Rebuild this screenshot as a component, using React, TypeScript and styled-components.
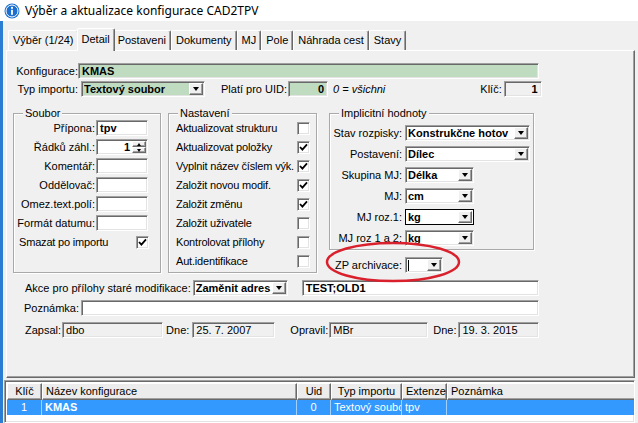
import styled, { createGlobalStyle, css } from 'styled-components';

const GlobalStyle = createGlobalStyle`
  * { box-sizing: border-box; }
  html, body { margin: 0; padding: 0; background: #f0f0f0; }
  body {
    font-family: "Liberation Sans", Arial, sans-serif;
    font-size: 11px;
    color: #000;
  }
`;

// windows classic 3d edges
const sunken = css`
  border: 1px solid;
  border-color: #a0a0a0 #fff #fff #a0a0a0;
  box-shadow: inset 1px 1px 0 #696969, inset -1px -1px 0 #e3e3e3;
`;

const raised = css`
  background: #f0f0f0;
  border: 1px solid;
  border-color: #fff #696969 #696969 #fff;
  box-shadow: inset -1px -1px 0 #a0a0a0;
`;

const tones = { white: '#fff', green: '#c0dcc0', gray: '#f0f0f0' };
type Tone = keyof typeof tones;

const Window = styled.div`
  width: 638px;
  height: 423px;
  overflow: hidden;
  display: flex;
  flex-direction: column;
  background: #f0f0f0;
`;

const TitleBar = styled.div`
  flex: none;
  height: 21px;
  display: flex;
  align-items: center;
  gap: 5px;
  padding-left: 4px;
  background: #fff;
  font-family: "Noto Sans", "Open Sans", sans-serif;
  font-size: 12px;
`;

const Body = styled.div`
  flex: 1;
  display: flex;
  flex-direction: column;
  border-left: 3px solid #2b7cd3;
  padding: 8px 3px 0 3px;
`;

const TabStrip = styled.div`
  flex: none;
  height: 21px;
  display: flex;
  align-items: flex-end;
  padding-left: 2px;
`;

const Tab = styled.div<{ $active?: boolean }>`
  position: relative;
  height: ${(p) => (p.$active ? 23 : 20)}px;
  margin: ${(p) => (p.$active ? '0 -2px -1px' : '0')};
  z-index: ${(p) => (p.$active ? 1 : 0)};
  padding: 0 4px;
  line-height: ${(p) => (p.$active ? 20 : 18)}px;
  white-space: nowrap;
  background: #f0f0f0;
  border-top: 1px solid #fff;
  border-left: 1px solid #fff;
  border-right: 1px solid #696969;
  border-radius: 2px 2px 0 0;
  box-shadow: inset -1px 0 0 #a0a0a0;
`;

const Panel = styled.div`
  position: relative;
  flex: none;
  height: 328px;
  padding-top: 12px;
  border: 1px solid;
  border-color: #fff #696969 #696969 #fff;
  box-shadow: inset -1px -1px 0 #a0a0a0;
`;

const Form = styled.div`
  width: 532px;
  display: flex;
  flex-direction: column;
`;

const Row = styled.div<{ $mt?: number; $pl?: number }>`
  display: flex;
  align-items: center;
  height: 16px;
  margin-top: ${(p) => p.$mt ?? 0}px;
  padding-left: ${(p) => p.$pl ?? 0}px;
`;

const Label = styled.span<{ $w?: number; $ml?: number }>`
  flex: none;
  ${(p) => (p.$w ? `width: ${p.$w}px;` : '')}
  margin-left: ${(p) => p.$ml ?? 0}px;
  text-align: right;
  white-space: nowrap;
`;

const Note = styled.span<{ $ml?: number }>`
  margin-left: ${(p) => p.$ml ?? 0}px;
  font-style: italic;
  white-space: nowrap;
`;

const Field = styled.div<{ $w?: number; $ml?: number; $tone?: Tone; $bold?: boolean; $right?: boolean }>`
  ${sunken};
  flex: ${(p) => (p.$w ? 'none' : '1')};
  ${(p) => (p.$w ? `width: ${p.$w}px;` : '')}
  margin-left: ${(p) => p.$ml ?? 0}px;
  height: 16px;
  padding: 0 3px;
  line-height: 14px;
  white-space: nowrap;
  overflow: hidden;
  background: ${(p) => tones[p.$tone ?? 'white']};
  font-weight: ${(p) => (p.$bold ? 'bold' : 'normal')};
  text-align: ${(p) => (p.$right ? 'right' : 'left')};
`;

const SelectBox = styled.div<{ $w: number; $ml?: number; $tone?: Tone; $focus?: boolean }>`
  ${sunken};
  ${(p) => (p.$focus ? 'border-color: #000; box-shadow: none;' : '')}
  flex: none;
  width: ${(p) => p.$w}px;
  margin-left: ${(p) => p.$ml ?? 0}px;
  height: 16px;
  display: flex;
  align-items: center;
  padding: 0 1px 0 2px;
  background: ${(p) => tones[p.$tone ?? 'white']};
`;

const SelectText = styled.span<{ $right?: boolean }>`
  flex: 1;
  min-width: 0;
  overflow: hidden;
  white-space: nowrap;
  font-weight: bold;
  line-height: 14px;
  text-align: ${(p) => (p.$right ? 'right' : 'left')};
  padding-right: ${(p) => (p.$right ? 2 : 0)}px;
`;

const Caret = styled.span`
  width: 1px;
  height: 11px;
  background: #000;
`;

const DropBtn = styled.span`
  ${raised};
  flex: none;
  width: 14px;
  height: 12px;
  display: flex;
  align-items: center;
  justify-content: center;
`;

const Arrow = styled.span<{ $up?: boolean; $size?: number }>`
  width: 0;
  height: 0;
  border-left: ${(p) => p.$size ?? 3}px solid transparent;
  border-right: ${(p) => p.$size ?? 3}px solid transparent;
  ${(p) => (p.$up ? 'border-bottom' : 'border-top')}: ${(p) => (p.$size ?? 3) + 1}px solid #000;
`;

const Spin = styled.span`
  flex: none;
  width: 14px;
  height: 12px;
  display: flex;
  flex-direction: column;
`;

const SpinBtn = styled.span`
  ${raised};
  flex: 1;
  display: flex;
  align-items: center;
  justify-content: center;
`;

const GroupsRow = styled.div`
  display: flex;
  align-items: flex-start;
  margin: 16px 0 0 6px;
`;

const Group = styled.div<{ $w: number; $h: number; $pad: string; $gap: number; $ml?: number }>`
  position: relative;
  flex: none;
  width: ${(p) => p.$w}px;
  height: ${(p) => p.$h}px;
  margin-left: ${(p) => p.$ml ?? 0}px;
  padding: ${(p) => p.$pad};
  display: flex;
  flex-direction: column;
  gap: ${(p) => p.$gap}px;
  border: 1px solid #a9a9a9;
  box-shadow: 1px 1px 0 #fff, inset 1px 1px 0 #fff;
`;

const Legend = styled.span`
  position: absolute;
  top: -7px;
  left: 9px;
  padding: 0 2px;
  line-height: 13px;
  background: #f0f0f0;
`;

const Column = styled.div<{ $ml: number }>`
  flex: none;
  margin-left: ${(p) => p.$ml}px;
  display: flex;
  flex-direction: column;
`;

const Line = styled.div<{ $between?: boolean; $mt?: number; $pad?: string }>`
  display: flex;
  align-items: center;
  height: 16px;
  margin-top: ${(p) => p.$mt ?? 0}px;
  padding: ${(p) => p.$pad ?? '0'};
  justify-content: ${(p) => (p.$between ? 'space-between' : 'flex-start')};
`;

const OptionText = styled.span`
  white-space: nowrap;
  letter-spacing: -0.18px;
`;

const CheckBox = styled.span`
  ${sunken};
  flex: none;
  width: 13px;
  height: 13px;
  background: #fff;
  display: flex;
  align-items: center;
  justify-content: center;
`;

const Ellipse = styled.svg`
  position: absolute;
  left: 317px;
  top: 189px;
  pointer-events: none;
`;

const Grid = styled.div`
  flex: 1;
  margin: 2px 0 0 -2px;
  ${sunken};
  background: #fff;
  display: flex;
  flex-direction: column;
  overflow: hidden;
  padding: 2px 0 0 2px;
`;

const GridRow = styled.div<{ $sel?: boolean; $h: number }>`
  flex: none;
  display: flex;
  height: ${(p) => p.$h}px;
  background: ${(p) => (p.$sel ? '#3399ff' : 'transparent')};
  color: ${(p) => (p.$sel ? '#fff' : '#000')};
`;

const HeadCell = styled.div<{ $w: number; $center?: boolean }>`
  ${raised};
  background: #ececec;
  flex: none;
  width: ${(p) => p.$w}px;
  padding: 0 3px;
  line-height: 15px;
  white-space: nowrap;
  text-align: ${(p) => (p.$center ? 'center' : 'left')};
`;

const Cell = styled.div<{ $w: number; $center?: boolean; $bold?: boolean }>`
  flex: none;
  width: ${(p) => p.$w}px;
  padding: 0 3px;
  line-height: 15px;
  white-space: nowrap;
  overflow: hidden;
  border-right: 1px solid rgba(255, 255, 255, 0.55);
  text-align: ${(p) => (p.$center ? 'center' : 'left')};
  font-weight: ${(p) => (p.$bold ? 'bold' : 'normal')};
`;

const InfoIcon = () => (
  <svg width="16" height="16" viewBox="0 0 16 16">
    <circle cx="8" cy="8" r="7.5" fill="#1c6fd0" />
    <circle cx="8" cy="8" r="6" fill="none" stroke="#fff" strokeWidth="1" />
    <rect x="7.1" y="6.8" width="1.8" height="5" fill="#fff" />
    <circle cx="8" cy="4.9" r="1.05" fill="#fff" />
  </svg>
);

const Check = ({ on }: { on?: boolean }) => (
  <CheckBox>
    {on && (
      <svg width="9" height="9" viewBox="0 0 9 9">
        <path d="M1 4 L3.4 6.6 L8 1.4" fill="none" stroke="#000" strokeWidth="1.8" />
      </svg>
    )}
  </CheckBox>
);

const Select = ({ w, value, tone, focus, caret, ml }: { w: number; value?: string; tone?: Tone; focus?: boolean; caret?: boolean; ml?: number }) => (
  <SelectBox $w={w} $tone={tone} $focus={focus} $ml={ml ?? 3}>
    {caret && <Caret />}
    <SelectText>{value}</SelectText>
    <DropBtn>
      <Arrow />
    </DropBtn>
  </SelectBox>
);

const tabs = ['Výběr (1/24)', 'Detail', 'Postaveni', 'Dokumenty', 'MJ', 'Pole', 'Náhrada cest', 'Stavy'];

const soubor = ['Přípona:', 'Řádků záhl.:', 'Komentář:', 'Oddělovač:', 'Omez.text.polí:', 'Formát datumu:'];

const nastaveni: [string, boolean][] = [
  ['Aktualizovat strukturu', false],
  ['Aktualizovat položky', true],
  ['Vyplnit název číslem výk.', true],
  ['Založit novou modif.', true],
  ['Založit změnu', true],
  ['Založit uživatele', false],
  ['Kontrolovat přílohy', false],
  ['Aut.identifikace', false],
];

const implicitni: [string, string, number, boolean?][] = [
  ['Stav rozpisky:', 'Konstrukčne hotov', 125],
  ['Postavení:', 'Dílec', 125],
  ['Skupina MJ:', 'Délka', 69],
  ['MJ:', 'cm', 69],
  ['MJ roz.1:', 'kg', 69, true],
  ['MJ roz 1 a 2:', 'kg', 69],
];

const columns = [
  { w: 35, title: 'Klíč', center: true },
  { w: 255, title: 'Název konfigurace' },
  { w: 34, title: 'Uid', center: true },
  { w: 71, title: 'Typ importu', center: true },
  { w: 45, title: 'Extenze', center: true },
  { w: 200, title: 'Poznámka' },
];

const record = [
  { v: '1', center: true },
  { v: 'KMAS', bold: true },
  { v: '0', center: true },
  { v: 'Textový soubor' },
  { v: 'tpv' },
  { v: '' },
];

const App = () => {
  return (
    <>
      <GlobalStyle />
      <Window>
        <TitleBar>
          <InfoIcon />
          <span>Výběr a aktualizace konfigurace CAD2TPV</span>
        </TitleBar>
        <Body>
          <TabStrip>
            {tabs.map((t) => (
              <Tab key={t} $active={t === 'Detail'}>
                {t}
              </Tab>
            ))}
          </TabStrip>
          <Panel>
            <Form>
              <Row>
                <Label $w={71}>Konfigurace:</Label>
                <Field $tone="green" $bold>
                  KMAS
                </Field>
              </Row>
              <Row $mt={2}>
                <Label $w={71}>Typ importu:</Label>
                <Select w={124} value="Textový soubor" tone="green" />
                <Label $ml={16}>Platí pro UID:</Label>
                <Field $w={40} $ml={1} $tone="green" $bold $right>
                  0
                </Field>
                <Note $ml={5}>0 = všichni</Note>
                <Label $ml={95}>Klíč:</Label>
                <Field $w={38} $ml={2} $tone="gray" $bold $right>
                  1
                </Field>
              </Row>

              <GroupsRow>
                <Group $w={148} $h={160} $pad="6px 0 0 0" $gap={3}>
                  <Legend>Soubor</Legend>
                  {soubor.map((l, i) => (
                    <Line key={l}>
                      <Label $w={81}>{l}</Label>
                      {i === 1 ? (
                        <SelectBox $w={52} $ml={1}>
                          <SelectText $right>1</SelectText>
                          <Spin>
                            <SpinBtn>
                              <Arrow $up $size={2} />
                            </SpinBtn>
                            <SpinBtn>
                              <Arrow $size={2} />
                            </SpinBtn>
                          </Spin>
                        </SelectBox>
                      ) : (
                        <Field $w={52} $ml={1} $bold>
                          {i === 0 ? 'tpv' : ''}
                        </Field>
                      )}
                    </Line>
                  ))}
                  <Line $between $pad="0 11px 0 5px">
                    <OptionText>Smazat po importu</OptionText>
                    <Check on />
                  </Line>
                </Group>

                <Group $w={149} $h={160} $pad="6px 6px 0 7px" $gap={3} $ml={7}>
                  <Legend>Nastavení</Legend>
                  {nastaveni.map(([l, on]) => (
                    <Line key={l} $between>
                      <OptionText>{l}</OptionText>
                      <Check on={on} />
                    </Line>
                  ))}
                </Group>

                <Column $ml={12}>
                  <Group $w={205} $h={137} $pad="11px 0 0 0" $gap={5}>
                    <Legend>Implicitní hodnoty</Legend>
                    {implicitni.map(([l, v, w, focus]) => (
                      <Line key={l}>
                        <Label $w={72}>{l}</Label>
                        <Select w={w} value={v} focus={focus} />
                      </Line>
                    ))}
                  </Group>
                  <Line $mt={7}>
                    <Label $w={73}>ZP archivace:</Label>
                    <Select w={38} caret />
                  </Line>
                </Column>
              </GroupsRow>

              <Row $mt={7} $pl={18}>
                <Label>Akce pro přílohy staré modifikace:</Label>
                <Select w={95} value="Zaměnit adres" ml={2} />
                <Field $ml={14} $bold>
                  TEST;OLD1
                </Field>
              </Row>
              <Row $mt={4}>
                <Label $w={72}>Poznámka:</Label>
                <Field $ml={2} />
              </Row>
              <Row $mt={6} $pl={18}>
                <Label>Zapsal:</Label>
                <Field $w={101} $ml={1} $tone="gray">
                  dbo
                </Field>
                <Label $ml={3}>Dne:</Label>
                <Field $w={83} $ml={3} $tone="gray">
                  25. 7. 2007
                </Field>
                <Label $ml={15}>Opravil:</Label>
                <Field $w={99} $ml={1} $tone="gray">
                  MBr
                </Field>
                <Label $ml={5}>Dne:</Label>
                <Field $ml={2} $tone="gray">
                  19. 3. 2015
                </Field>
              </Row>
            </Form>

            <Ellipse width="138" height="44" viewBox="0 0 138 44">
              <ellipse cx="69" cy="22" rx="66" ry="19" fill="none" stroke="#d9202c" strokeWidth="2.5" />
            </Ellipse>
          </Panel>

          <Grid>
            <GridRow $h={17}>
              {columns.map((c) => (
                <HeadCell key={c.title} $w={c.w} $center={c.center}>
                  {c.title}
                </HeadCell>
              ))}
            </GridRow>
            <GridRow $h={15} $sel>
              {record.map((r, i) => (
                <Cell key={i} $w={columns[i].w} $center={r.center} $bold={r.bold}>
                  {r.v}
                </Cell>
              ))}
            </GridRow>
          </Grid>
        </Body>
      </Window>
    </>
  );
};

export default App;
